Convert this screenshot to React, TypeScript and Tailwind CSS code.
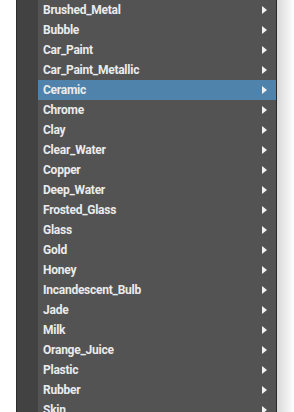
const items = [
  'Brushed_Metal',
  'Bubble',
  'Car_Paint',
  'Car_Paint_Metallic',
  'Ceramic',
  'Chrome',
  'Clay',
  'Clear_Water',
  'Copper',
  'Deep_Water',
  'Frosted_Glass',
  'Glass',
  'Gold',
  'Honey',
  'Incandescent_Bulb',
  'Jade',
  'Milk',
  'Orange_Juice',
  'Plastic',
  'Rubber',
  'Skin',
]

function Arrow() {
  return (
    <svg width="5" height="8" viewBox="0 0 5 8" className="shrink-0">
      <path d="M0 0 L5 4 L0 8 Z" fill="#f2f2f2" />
    </svg>
  )
}

export default function App() {
  const selected = 'Ceramic'
  return (
    <div className="flex h-[412px] w-[294px] overflow-hidden bg-white">
      <div className="w-[16px] shrink-0 bg-white" />
      <div className="w-[22px] shrink-0 border-l border-[#2e2e2e] bg-[#424242]" />
      <div className="w-[238px] shrink-0 bg-[#535353]">
        {items.map((name) => (
          <div
            key={name}
            className={`flex h-[20px] items-center justify-between pl-[5px] pr-[9px] ${
              name === selected ? 'bg-[#4f83ab]' : ''
            }`}
          >
            <span className="font-['Roboto',sans-serif] text-[12px] leading-none font-bold tracking-[-0.25px] text-[#ebebeb]">
              {name}
            </span>
            <Arrow />
          </div>
        ))}
      </div>
      <div className="w-[1px] shrink-0 bg-[#2a2a2a]" />
      <div className="flex-1 bg-gradient-to-r from-[#d8d8d8] to-white" />
    </div>
  )
}
